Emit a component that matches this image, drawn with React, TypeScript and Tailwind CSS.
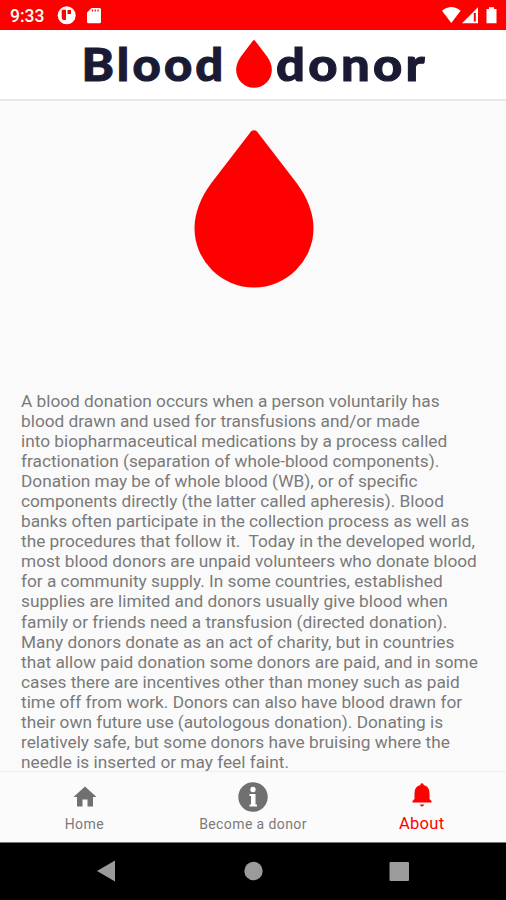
const paragraph = [
  'A blood donation occurs when a person voluntarily has',
  'blood drawn and used for transfusions and/or made',
  'into biopharmaceutical medications by a process called',
  'fractionation (separation of whole-blood components).',
  'Donation may be of whole blood (WB), or of specific',
  'components directly (the latter called apheresis). Blood',
  'banks often participate in the collection process as well as',
  'the procedures that follow it.  Today in the developed world,',
  'most blood donors are unpaid volunteers who donate blood',
  'for a community supply. In some countries, established',
  'supplies are limited and donors usually give blood when',
  'family or friends need a transfusion (directed donation).',
  'Many donors donate as an act of charity, but in countries',
  'that allow paid donation some donors are paid, and in some',
  'cases there are incentives other than money such as paid',
  'time off from work. Donors can also have blood drawn for',
  'their own future use (autologous donation). Donating is',
  'relatively safe, but some donors have bruising where the',
  'needle is inserted or may feel faint.',
]

function Drop({ className }: { className: string }) {
  return (
    <svg viewBox="0 0 120 158" preserveAspectRatio="none" className={className} fill="#ff0000">
      <path d="M57 1.500Q60-1.200 63 1.500L103 53.500C113 67 119.500 83 119.500 98A59.500 59.500 0 0 1 .5 98C.5 83 7 67 17 53.500Z" />
    </svg>
  )
}

function StatusBar() {
  return (
    <div className="flex h-[30px] items-center bg-[#ff0000] pl-[10px] pr-[8px] text-white">
      <span className="w-[47px] pt-[2px] text-[17.500px] leading-[30px] font-medium">9:33</span>
      <svg width="46" height="30" viewBox="0 0 46 30" fill="white">
        <circle cx="9.700" cy="15.300" r="9" />
        <path d="M9 9.800H5.800Q4.700 9.800 4.700 11V17.500Q4.700 19.500 6.500 20H9ZM10.500 10h3.500v4h-3.500z" fill="#ff0000" />
        <path d="M34.500 8H42.500Q44 8 44 9.500V22Q44 23.300 42.500 23.300H31.500Q30 23.300 30 22V12.500Z" />
        <path d="M35.500 9.500v2M38.200 9.500v2M41 9.500v2" stroke="#ff0000" strokeWidth="1.200" />
      </svg>
      <svg width="56" height="30" viewBox="0 0 56 30" className="ml-auto" fill="white">
        <path d="M0 10.800Q9.300 3.300 18.600 10.800L9.300 23Z" />
        <path d="M20 23.300L36 7.300V23.300Z" />
        <path d="M31.800 13h2v8.500h-2z" fill="#ff0000" />
        <path d="M44.500 9H47V7.200H52V9H54.500V23.300H44.500Z" />
      </svg>
    </div>
  )
}

function Header() {
  return (
    <header className="h-[71px] border-b-2 border-[#e8e8e8] bg-white">
      <div className="flex h-full items-start pl-[84px] pt-[10px] font-[family-name:Lato] text-[46px] font-black tracking-[3px] text-[#1b1a35]">
        <svg width="139" height="50" className="overflow-visible" fill="currentColor" stroke="currentColor" strokeWidth="1">
          <text x="-2.500" y="41" textLength="145" lengthAdjust="spacingAndGlyphs">Blood</text>
        </svg>
        <Drop className="ml-[13px] h-[48px] w-[36px]" />
        <svg width="150" height="50" className="ml-[5px] overflow-visible" fill="currentColor" stroke="currentColor" strokeWidth="1">
          <text x="-1" y="41" textLength="152" lengthAdjust="spacingAndGlyphs">donor</text>
        </svg>
      </div>
    </header>
  )
}

function BottomNav() {
  return (
    <nav className="grid h-[71px] grid-cols-3 border-t border-[#f0f0f0] bg-[#fbfbfb] text-center text-[14px] text-[#7a7a7a]">
      <div className="flex flex-col items-center">
        <svg width="30" height="30" viewBox="0 0 30 30" className="mt-[9px] ml-px" fill="#707070">
          <path d="M15 5.500L26.500 16H23V25.500H17.500V18.500H12.500V25.500H7V16H3.500Z" />
        </svg>
        <span className="mt-[3px] leading-5 tracking-[0.4px]">Home</span>
      </div>
      <div className="flex flex-col items-center">
        <svg width="30" height="30" viewBox="0 0 30 30" className="mt-[10px] ml-px">
          <circle cx="15" cy="15" r="14.700" fill="#707070" />
          <circle cx="15" cy="7.500" r="2.700" fill="white" />
          <path d="M11.500 12H17.500V22.500H19V24.500H11.500V22.500H13V14H11.500Z" fill="white" />
        </svg>
        <span className="mt-[2px] leading-5 tracking-[0.4px]">Become a donor</span>
      </div>
      <div className="flex flex-col items-center text-[#ff0000]">
        <svg width="30" height="30" viewBox="0 0 30 30" className="mt-[8px] ml-px" fill="#ff0000">
          <path d="M13.500 5V4Q15 2.500 16.500 4V5Q22.500 6.500 22.500 13V19L24.500 21V22.500H5.500V21L7.500 19V13Q7.500 6.500 13.500 5ZM13 24.500H17Q17 26.500 15 26.500Q13 26.500 13 24.500Z" />
        </svg>
        <span className="mt-[4px] text-[16.500px] leading-5 tracking-[0.3px]">About</span>
      </div>
    </nav>
  )
}

function SystemBar() {
  return (
    <div className="h-[58px] border-t border-[#777777] bg-black">
      <svg width="506" height="57" viewBox="0 0 506 57" fill="#9b9b9b">
        <path d="M97 28L115 17.500V38.500Z" />
        <circle cx="253.500" cy="28" r="9.200" />
        <rect x="389.500" y="19" width="19.500" height="19" rx="1" />
      </svg>
    </div>
  )
}

export default function App() {
  return (
    <div className="flex h-[900px] w-[506px] flex-col overflow-hidden bg-[#fafafa] font-['Roboto',sans-serif]">
      <StatusBar />
      <Header />
      <main className="flex min-h-0 flex-1 flex-col items-center">
        <Drop className="mt-[29px] ml-px h-[158px] w-[120px] shrink-0" />
        <div className="mt-[103px] w-full pl-[21px] text-[17.250px] leading-[20.050px] text-[#7a7a7a]">
          {paragraph.map((line) => (
            <p key={line} className="whitespace-pre">{line}</p>
          ))}
        </div>
      </main>
      <BottomNav />
      <SystemBar />
    </div>
  )
}
